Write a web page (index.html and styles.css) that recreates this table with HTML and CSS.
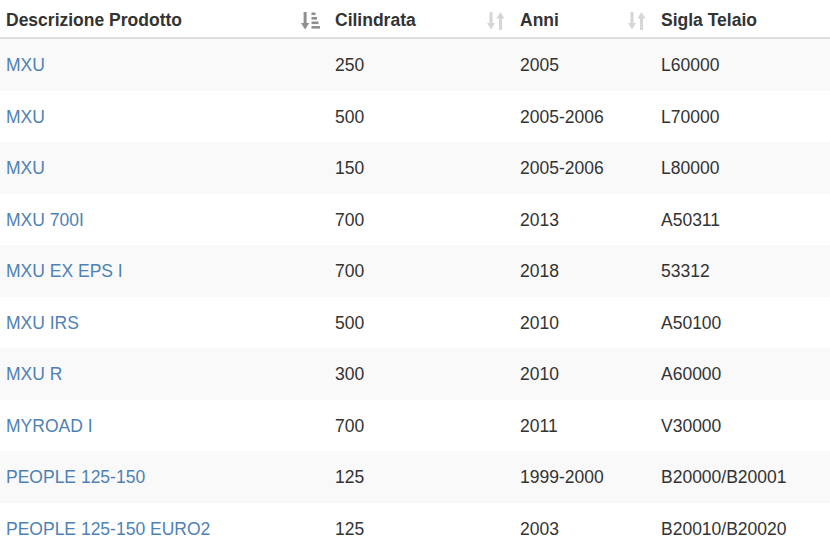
FILE: index.html
```html
<!DOCTYPE html>
<html>
<head>
<meta charset="utf-8">
<link rel="stylesheet" href="styles.css">
</head>
<body>
<table class="tbl">
  <colgroup>
    <col class="c1"><col class="c2"><col class="c3"><col class="c4">
  </colgroup>
  <thead>
    <tr>
      <th><div class="th-in"><span>Descrizione Prodotto</span>
        <svg class="ico active" width="19" height="18" viewBox="0 0 19 18"><rect x="2.6" y="0" width="3" height="12"/><polygon points="0,11 8.2,11 4.1,17.5"/><rect x="10.5" y="0.5" width="4" height="2.6"/><rect x="10.5" y="5" width="5.5" height="2.6"/><rect x="10.5" y="9.5" width="7" height="2.6"/><rect x="10.5" y="14" width="8.5" height="2.6"/></svg></div></th>
      <th><div class="th-in"><span>Cilindrata</span>
        <svg class="ico" width="18" height="18" viewBox="0 0 18 18"><rect x="2.5" y="0" width="3" height="12"/><polygon points="0,11 8,11 4,17.5"/><rect x="12" y="5.5" width="3" height="12.5"/><polygon points="9.5,6.5 17.5,6.5 13.5,0"/></svg></div></th>
      <th><div class="th-in"><span>Anni</span>
        <svg class="ico" width="18" height="18" viewBox="0 0 18 18"><rect x="2.5" y="0" width="3" height="12"/><polygon points="0,11 8,11 4,17.5"/><rect x="12" y="5.5" width="3" height="12.5"/><polygon points="9.5,6.5 17.5,6.5 13.5,0"/></svg></div></th>
      <th><div class="th-in"><span>Sigla Telaio</span></div></th>
    </tr>
  </thead>
  <tbody>
    <tr><td><a href="#">MXU</a></td><td>250</td><td>2005</td><td>L60000</td></tr>
    <tr><td><a href="#">MXU</a></td><td>500</td><td>2005-2006</td><td>L70000</td></tr>
    <tr><td><a href="#">MXU</a></td><td>150</td><td>2005-2006</td><td>L80000</td></tr>
    <tr><td><a href="#">MXU 700I</a></td><td>700</td><td>2013</td><td>A50311</td></tr>
    <tr><td><a href="#">MXU EX EPS I</a></td><td>700</td><td>2018</td><td>53312</td></tr>
    <tr><td><a href="#">MXU IRS</a></td><td>500</td><td>2010</td><td>A50100</td></tr>
    <tr><td><a href="#">MXU R</a></td><td>300</td><td>2010</td><td>A60000</td></tr>
    <tr><td><a href="#">MYROAD I</a></td><td>700</td><td>2011</td><td>V30000</td></tr>
    <tr><td><a href="#">PEOPLE 125-150</a></td><td>125</td><td>1999-2000</td><td>B20000/B20001</td></tr>
    <tr><td><a href="#">PEOPLE 125-150 EURO2</a></td><td>125</td><td>2003</td><td>B20010/B20020</td></tr>
  </tbody>
</table>
</body>
</html>
```

FILE: styles.css
```css
html, body {
  margin: 0;
  padding: 0;
  background: #fff;
}
body {
  font-family: "Liberation Sans", Arial, sans-serif;
  font-size: 17.5px;
  color: #333;
}
.tbl {
  width: 830px;
  border-collapse: collapse;
  border-spacing: 0;
  table-layout: fixed;
}
.c1 { width: 329px; }
.c2 { width: 185px; }
.c3 { width: 141px; }
.c4 { width: 175px; }
.tbl th {
  text-align: left;
  font-weight: bold;
  padding: 9px 9px 5px 6px;
  line-height: 23px;
  border-bottom: 2px solid #ddd;
}
.th-in {
  display: flex;
  align-items: center;
  justify-content: space-between;
}
.ico {
  fill: #d6d6d6;
  flex: none;
}
.ico.active {
  fill: #8f8f8f;
}
.tbl td {
  padding: 15px 6px 13px;
  line-height: 23.5px;
  vertical-align: top;
}
.tbl tbody tr:nth-child(odd) {
  background: #f9f9f9;
}
.tbl a {
  color: #4f82b2;
  text-decoration: none;
}
```
